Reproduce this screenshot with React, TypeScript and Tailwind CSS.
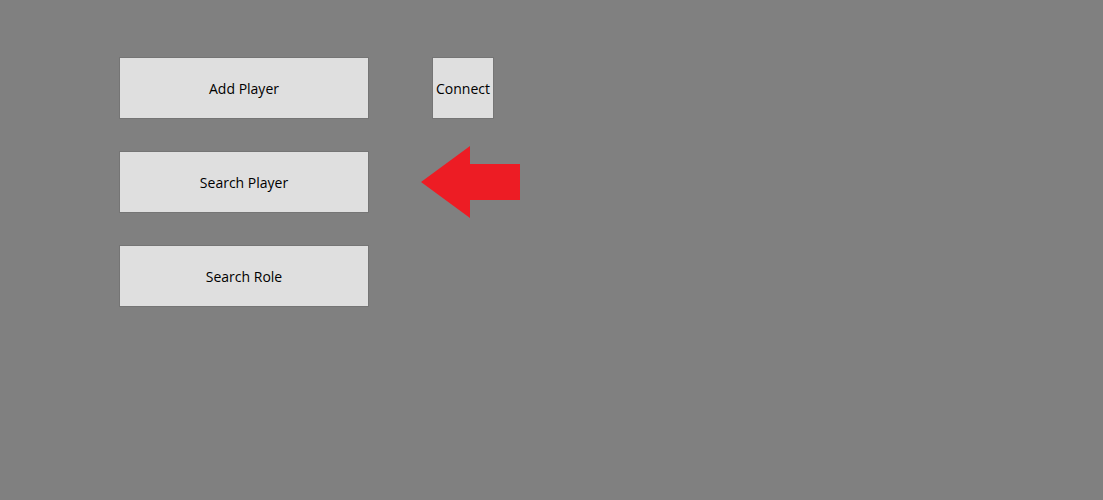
const buttonClass =
  "flex items-center justify-center border border-[#757575] bg-[#dfdfdf] text-[14px] text-black";

function FormButton({ label, className = "" }: { label: string; className?: string }) {
  return (
    <button type="button" className={`${buttonClass} ${className}`}>
      {label}
    </button>
  );
}

function Arrow() {
  return (
    <svg width="100" height="72" viewBox="0 0 100 72" className="block">
      <polygon points="0,36 49,0 49,18 99,18 99,54 49,54 49,72" fill="#ed1c24" />
    </svg>
  );
}

export default function App() {
  return (
    <div
      className="flex h-[500px] w-full bg-[#808080] pl-[119px] pt-[57px]"
      style={{ fontFamily: '"Segoe UI", "Open Sans", "Noto Sans", sans-serif' }}
    >
      <div className="flex flex-col gap-[32px]">
        <FormButton label="Add Player" className="h-[62px] w-[250px]" />
        <FormButton label="Search Player" className="h-[62px] w-[250px]" />
        <FormButton label="Search Role" className="h-[62px] w-[250px]" />
      </div>
      <div className="ml-[52px] flex flex-col">
        <FormButton label="Connect" className="ml-[11px] h-[62px] w-[62px]" />
        <div className="mt-[27px]">
          <Arrow />
        </div>
      </div>
    </div>
  );
}
